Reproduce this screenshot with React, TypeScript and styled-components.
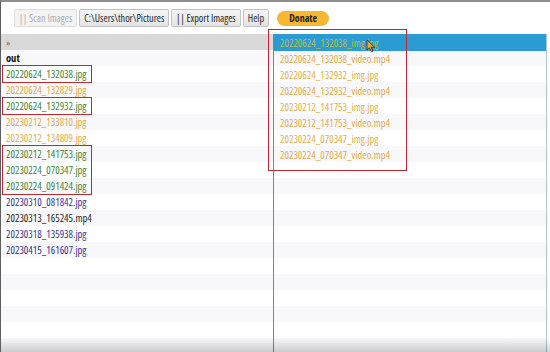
import React from "react";
import styled, { createGlobalStyle } from "styled-components";

const Global = createGlobalStyle`
  html, body { margin: 0; padding: 0; background: #fff; overflow: hidden; }
  * { box-sizing: border-box; }
`;

const Window = styled.div`
  width: 550px;
  height: 352px;
  display: flex;
  flex-direction: column;
  background: #fff;
  border-top: 2px solid #8d8d8d;
  border-left: 1px solid #5f5f5f;
  font-family: "Open Sans", "Noto Sans", sans-serif;
  font-stretch: 80%;
  overflow: hidden;
`;

const Toolbar = styled.div`
  display: flex;
  align-items: center;
  gap: 2px;
  height: 32px;
  padding: 0 0 0 13px;
`;

const ToolButton = styled.button<{ $disabled?: boolean }>`
  height: 18px;
  padding: 0 4px;
  font-family: inherit;
  font-stretch: 80%;
  font-size: 10.2px;
  line-height: 16px;
  border-radius: 2px;
  border: 1px solid ${(p) => (p.$disabled ? "#dcdcdc" : "#c2c2c2")};
  background: ${(p) => (p.$disabled ? "#f3f3f3" : "linear-gradient(#f5f5f5, #e4e4e4)")};
  color: ${(p) => (p.$disabled ? "#b0b0b0" : "#2a2a2a")};
  white-space: nowrap;
`;

const Donate = styled.button`
  margin-left: 6px;
  height: 15px;
  width: 52px;
  border: none;
  border-radius: 8px;
  background: #f7b731;
  color: #1e1e1e;
  font-family: inherit;
  font-stretch: 80%;
  font-size: 10px;
  font-weight: 700;
  padding: 0;
`;

const Main = styled.div`
  position: relative;
  flex: 1;
  display: grid;
  grid-template-columns: 272px 274px;
  &::after {
    content: "";
    position: absolute;
    left: 0;
    right: 0;
    bottom: 0;
    height: 14px;
    background: linear-gradient(rgba(0, 0, 0, 0), rgba(0, 0, 0, 0.18));
    pointer-events: none;
  }
`;

const Column = styled.div<{ $side: "left" | "right" }>`
  display: flex;
  flex-direction: column;
  background: repeating-linear-gradient(
    to bottom,
    #fff 0,
    #fff 16px,
    #f8f8fa 16px,
    #f8f8fa 32px
  );
  ${(p) =>
    p.$side === "right"
      ? `border-left: 1px solid #3a9acb; border-right: 1px solid #a9c9d8;`
      : ``}
`;

const Header = styled.div<{ $active?: boolean }>`
  height: ${(p) => (p.$active ? "17px" : "16px")};
  display: flex;
  align-items: center;
  padding-left: ${(p) => (p.$active ? "6px" : "5px")};
  background: ${(p) => (p.$active ? "#2c9bd1" : "#d9d9d9")};
  color: ${(p) => (p.$active ? "#b9bd4a" : "#666")};
  font-size: ${(p) => (p.$active ? "10.5px" : "9px")};
`;

type Tone = "green" | "orange" | "blue" | "black" | "bold";

const toneColor: Record<Tone, string> = {
  green: "#3a883a",
  orange: "#e6ab48",
  blue: "#30339a",
  black: "#1e1e1e",
  bold: "#111",
};

const Row = styled.div<{ $tone: Tone }>`
  height: 16px;
  display: flex;
  align-items: center;
  padding-left: 5px;
  font-size: 10.5px;
  white-space: nowrap;
  color: ${(p) => toneColor[p.$tone]};
  font-weight: ${(p) => (p.$tone === "bold" ? 700 : 400)};
`;

const RightRow = styled(Row)`
  padding-left: 6px;
`;

const Group = styled.div<{ $mark?: boolean }>`
  position: relative;
  ${(p) =>
    p.$mark
      ? `&::after {
    content: "";
    position: absolute;
    left: 1px;
    top: -1px;
    bottom: -1px;
    width: 88px;
    border: 1.5px solid #c2272d;
    pointer-events: none;
  }`
      : ``}
`;

const RightGroup = styled.div`
  position: relative;
  &::after {
    content: "";
    position: absolute;
    left: -6px;
    top: -5px;
    width: 137px;
    height: 140px;
    border: 1.5px solid #c2272d;
    pointer-events: none;
  }
`;

const Cursor = styled.svg`
  position: absolute;
  left: 92px;
  top: 5px;
`;

type Item = { name: string; tone: Tone };

const leftItems: Item[][] = [
  [{ name: "out", tone: "bold" }],
  [{ name: "20220624_132038.jpg", tone: "green" }],
  [{ name: "20220624_132829.jpg", tone: "orange" }],
  [{ name: "20220624_132932.jpg", tone: "green" }],
  [
    { name: "20230212_133810.jpg", tone: "orange" },
    { name: "20230212_134809.jpg", tone: "orange" },
  ],
  [
    { name: "20230212_141753.jpg", tone: "green" },
    { name: "20230224_070347.jpg", tone: "green" },
    { name: "20230224_091424.jpg", tone: "green" },
  ],
  [
    { name: "20230310_081842.jpg", tone: "blue" },
    { name: "20230313_165245.mp4", tone: "black" },
    { name: "20230318_135938.jpg", tone: "blue" },
    { name: "20230415_161607.jpg", tone: "blue" },
  ],
];

const markedGroups = new Set([1, 3, 5]);

const rightItems = [
  "20220624_132038_video.mp4",
  "20220624_132932_img.jpg",
  "20220624_132932_video.mp4",
  "20230212_141753_img.jpg",
  "20230212_141753_video.mp4",
  "20230224_070347_img.jpg",
  "20230224_070347_video.mp4",
];

export default function App() {
  return (
    <>
      <Global />
      <Window>
        <Toolbar>
          <ToolButton $disabled>|| Scan Images</ToolButton>
          <ToolButton>C:\Users\thor\Pictures</ToolButton>
          <ToolButton>|| Export Images</ToolButton>
          <ToolButton>Help</ToolButton>
          <Donate>Donate</Donate>
        </Toolbar>
        <Main>
          <Column $side="left">
            <Header>»</Header>
            {leftItems.map((group, gi) => (
              <Group key={gi} $mark={markedGroups.has(gi)}>
                {group.map((it) => (
                  <Row key={it.name} $tone={it.tone}>
                    {it.name}
                  </Row>
                ))}
              </Group>
            ))}
          </Column>
          <Column $side="right">
            <RightGroup>
              <Header $active>20220624_132038_img.jpg</Header>
              {rightItems.map((n) => (
                <RightRow key={n} $tone="orange">
                  {n}
                </RightRow>
              ))}
              <Cursor width="10" height="14" viewBox="0 0 10 14">
                <path
                  d="M1 1 L1 11 L3.5 8.8 L5.5 13 L7 12.3 L5 8.2 L8.5 8.2 Z"
                  fill="#e9a93a"
                  stroke="#3a2a10"
                  strokeWidth="0.8"
                />
              </Cursor>
            </RightGroup>
          </Column>
        </Main>
      </Window>
    </>
  );
}
